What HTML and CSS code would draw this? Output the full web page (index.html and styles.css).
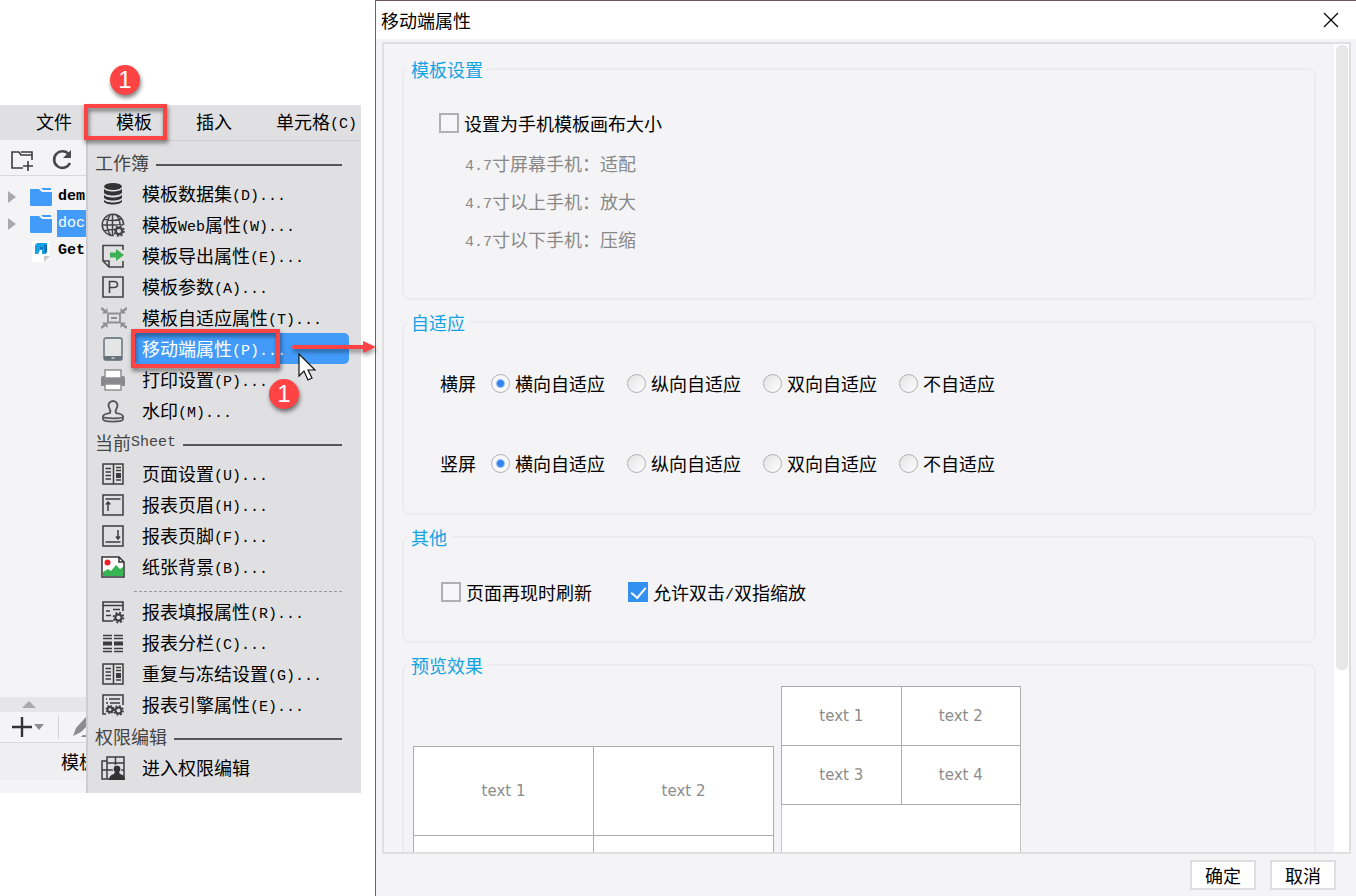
FILE: index.html
```html
<!DOCTYPE html>
<html lang="zh-CN">
<head>
<meta charset="utf-8">
<title>移动端属性</title>
<link rel="stylesheet" href="styles.css">
</head>
<body>
<div class="page">
  <section class="designer">
    <nav class="menubar">
      <button class="menubar-item">文件</button>
      <button class="menubar-item marked">模板<span class="frame frame-bar"></span><span class="badge badge-bar">1</span></button>
      <button class="menubar-item">插入</button>
      <button class="menubar-item">单元格<span class="mono">(C)</span></button>
    </nav>
    <div class="workspace">
      <aside class="sidebar">
        <div class="tools">
          <button class="tool" aria-label="新建文件夹"><svg width="24" height="24" viewBox="0 0 24 24" fill="none" stroke="#3c3c3c" stroke-width="1.6"><path d="M13 20H2V4h7l2 3h11v5M11 4h11v3"/><path d="M18 13v10M13 18h10"/></svg></button>
          <button class="tool" aria-label="刷新"><svg width="24" height="24" viewBox="0 0 24 24" fill="none" stroke="#484848" stroke-width="2.6"><path d="M19 6.500A8.300 8.300 0 1 0 20 15"/><path d="M21 2v8h-8z" fill="#484848" stroke="none"/></svg></button>
        </div>
        <ul class="tree">
          <li class="node"><span class="twisty"></span><svg class="folder" width="22" height="18" viewBox="0 0 22 18"><path d="M0 1h9l3 3h10v12.500q0 1.500-1.500 1.500h-19Q0 18 0 16.500z" fill="#429bf9"/><path d="M11 0h10v2h-8z" fill="#429bf9"/></svg><span class="node-name">dem</span></li>
          <li class="node"><span class="twisty"></span><svg class="folder" width="22" height="18" viewBox="0 0 22 18"><path d="M0 1h9l3 3h10v12.500q0 1.500-1.500 1.500h-19Q0 18 0 16.500z" fill="#429bf9"/><path d="M11 0h10v2h-8z" fill="#429bf9"/></svg><span class="node-name selected">doc</span></li>
          <li class="node"><span class="twisty none"></span><svg class="folder" width="22" height="22" viewBox="0 0 22 22"><path d="M2 1h18v15l-5 6H2z" fill="#fff"/><path d="M14 16h6l-6 6z" fill="#c9c9cc"/><path d="M5 5l2-2h10v9l-2 2h-3v-4h-2l-2 4H5z" fill="#18a0e4"/><path d="M10 7h3v2h-3zM14 5h3v7l-2 2z" fill="#0a72be"/></svg><span class="node-name">Get</span></li>
        </ul>
        <div class="splitter"><span class="up"></span></div>
        <div class="tools data-tools">
          <button class="tool" aria-label="添加"><svg width="24" height="24" viewBox="0 0 24 24"><path d="M12 2v20M2 12h20" stroke="#333" stroke-width="2.400"/></svg></button>
          <span class="down"></span><span class="rule"></span>
          <button class="tool" aria-label="编辑"><svg width="24" height="24" viewBox="0 0 24 24" fill="#8c8c8e"><path d="M2 21l3-8L15 2l6 4-11 11zM12 20h10v2H10z"/></svg></button>
        </div>
        <div class="dataset-tab">模板</div>
      </aside>

      <div class="menu">
        <h3 class="group">工作簿</h3>
        <button class="item"><svg class="icon" viewBox="0 0 24 24" fill="#333"><ellipse cx="12" cy="4.500" rx="9" ry="3.500"/><path d="M3 6.500c1 4 17 4 18 0v4c-1 4-17 4-18 0zM3 12.500c1 4 17 4 18 0v3c-1 4-17 4-18 0zM3 17.500c1 4 17 4 18 0v2c-1 4-17 4-18 0z"/></svg><span class="label">模板数据集<span class="mono">(D)...</span></span></button>
        <button class="item"><svg class="icon" viewBox="0 0 24 24" fill="none" stroke="#444" stroke-width="1.500"><path d="M13 22.500A10.700 10.700 0 1 1 22.600 12M11.500 1v22M1 12h21M3 6q9 3 17 0M3 18q5-2 10-1.500M10 1Q2 11 10 23M14 1q5 4 5 11"/><circle cx="18" cy="18" r="6" fill="#e0e0e2" stroke="none"/><circle cx="18" cy="18" r="3.300" stroke-width="2.400"/><circle cx="18" cy="18" r="5" stroke-width="1.600" stroke-dasharray="2 1.930"/></svg><span class="label">模板<span class="mono">Web</span>属性<span class="mono">(W)...</span></span></button>
        <button class="item"><svg class="icon" viewBox="0 0 24 24" fill="none" stroke="#444" stroke-width="1.600"><path d="M22 6V1.500H2V17l6 6h14v-6M2 17h6v6"/><path d="M9 8.500h6V5l8 6-8 6v-3.500H9z" fill="#3cb054" stroke="none"/></svg><span class="label">模板导出属性<span class="mono">(E)...</span></span></button>
        <button class="item"><svg class="icon" viewBox="0 0 24 24" fill="none" stroke="#444" stroke-width="1.600"><path d="M2 2h20v20H2zM8.500 18V6.500h4.500q3.500 0 3.500 3t-3.500 3H8.500"/></svg><span class="label">模板参数<span class="mono">(A)...</span></span></button>
        <button class="item"><svg class="icon wide" viewBox="0 0 26 24" fill="none" stroke="#8f8f91" stroke-width="1.800"><path d="M7 7.500h12v9H7zM10 12h6"/><path d="M0 2l5 4M26 2l-5 4M0 22l5-4M26 22l-5-4" stroke-width="2.400"/><path d="M1 7.500h5.500V2zM25 7.500h-5.500V2zM1 16.500h5.500V22zM25 16.500h-5.500V22z" fill="#8f8f91" stroke="none"/></svg><span class="label">模板自适应属性<span class="mono">(T)...</span></span></button>
        <button class="item active"><svg class="icon" viewBox="0 0 24 24"><rect x="3" y="1" width="18" height="22" rx="2" fill="#e4e5e7" stroke="#7b868d" stroke-width="1.800"/><path d="M3 19h18v4H3z" fill="#66737b"/><path d="M10.500 21h3" stroke="#fff"/></svg><span class="label">移动端属性<span class="mono">(P)...</span><span class="frame frame-item"></span><span class="badge badge-item">1</span>
          <svg class="arrow" width="86" height="22" viewBox="0 0 86 22"><path d="M2 9h72" stroke="#fd4344" stroke-width="4" stroke-linecap="round"/><path d="M71 3l13 6-13 6z" fill="#fd4344"/></svg>
          <svg class="cursor" width="20" height="28" viewBox="0 0 20 28"><path d="M1 1v22l5-5 4 9 4-2-4-8h7z" fill="#fff" stroke="#111" stroke-width="1.200"/></svg></span></button>
        <button class="item"><svg class="icon" viewBox="0 0 24 24"><path d="M2 8h20q2 0 2 2v8H0v-8q0-2 2-2z" fill="#89898b"/><path d="M4 2h16v8H4zM4 16h16v6H4z" fill="#fff" stroke="#909092" stroke-width="1.500"/></svg><span class="label">打印设置<span class="mono">(P)...</span></span></button>
        <button class="item"><svg class="icon" viewBox="0 0 24 24" fill="none" stroke="#58585a" stroke-width="1.900"><path d="M9 14q1-2-.5-4.500C6 5 9 2 12 2s6 3 3.500 7.500Q14 12 15 14c3 .5 7 1 7 3.500S2 20 2 17.500 6 14.500 9 14zM2 17v3c0 3.500 20 3.500 20 0v-3"/></svg><span class="label">水印<span class="mono">(M)...</span></span></button>

        <h3 class="group">当前<span class="mono">Sheet</span></h3>
        <button class="item"><svg class="icon" viewBox="0 0 24 24" fill="none" stroke="#3c3c3c" stroke-width="1.500"><path d="M2 2h20v20H2zM12.500 2v20M4.500 6.500H10M4.500 10H10M4.500 13.500H10M4.500 17H10M15 5.500h5M15 8.500h5M15 18h5"/><path d="M15 11h5v5h-5z" fill="#3c3c3c" stroke="none"/></svg><span class="label">页面设置<span class="mono">(U)...</span></span></button>
        <button class="item"><svg class="icon" viewBox="0 0 24 24" fill="none" stroke="#3c3c3c" stroke-width="1.500"><path d="M2 2h20v20H2zM4.500 6h15M7 18v-8M5 11.500L7 9l2.500 2.500"/></svg><span class="label">报表页眉<span class="mono">(H)...</span></span></button>
        <button class="item"><svg class="icon" viewBox="0 0 24 24" fill="none" stroke="#3c3c3c" stroke-width="1.500"><path d="M2 2h20v20H2zM4.500 18h15M17 6v8M15 12.500l2 2.500 2-2.500"/></svg><span class="label">报表页脚<span class="mono">(F)...</span></span></button>
        <button class="item"><svg class="icon" viewBox="0 0 24 24"><path d="M1 2h17l5 5v15H1z" fill="#fff" stroke="#333" stroke-width="1.500"/><path d="M2 21v-4l5-3 3 2 5-6 4 4 3-2v9z" fill="#36b352"/><circle cx="6.500" cy="7.500" r="3" fill="#f11f2c"/><path d="M18 2v5h5" fill="none" stroke="#333" stroke-width="1.500"/></svg><span class="label">纸张背景<span class="mono">(B)...</span></span></button>
        <hr class="divider">
        <button class="item"><svg class="icon" viewBox="0 0 24 24" fill="none" stroke="#3c3c3c" stroke-width="1.600"><path d="M12 21H2V2h20v9M2 5.500h20M5 11h4M12 9.500h7M5 15.500h5"/><circle cx="17.500" cy="17.500" r="3.200" stroke-width="2.200"/><circle cx="17.500" cy="17.500" r="5" stroke-dasharray="2 1.930"/></svg><span class="label">报表填报属性<span class="mono">(R)...</span></span></button>
        <button class="item"><svg class="icon" viewBox="0 0 24 24" stroke="#3c3c3c" stroke-width="1.500"><path d="M2 4.500h9M13 4.500h9M2 7.500h9M13 7.500h9M2 17.500h9M13 17.500h9M2 20.500h9M13 20.500h9"/><path d="M2 12.500h9M13 12.500h9" stroke-width="4"/></svg><span class="label">报表分栏<span class="mono">(C)...</span></span></button>
        <button class="item"><svg class="icon" viewBox="0 0 24 24" fill="none" stroke="#3c3c3c" stroke-width="1.500"><path d="M2 2h20v20H2zM12.500 2v20M4.500 6.500H10M4.500 10H10M4.500 13.500H10M4.500 17H10M15 5.500h5M15 8.500h5M15 18h5"/><path d="M15 11h5v5h-5z" fill="#3c3c3c" stroke="none"/></svg><span class="label">重复与冻结设置<span class="mono">(G)...</span></span></button>
        <button class="item"><svg class="icon" viewBox="0 0 24 24" fill="none" stroke="#3c3c3c" stroke-width="1.500"><path d="M5 21H2V2h20v10M5 6h1M8 6h11M5 10h2M9 10h10"/><circle cx="9" cy="16.500" r="2.500" stroke-width="2"/><circle cx="9" cy="16.500" r="3.800" stroke-dasharray="1.500 1.480"/><circle cx="17.500" cy="17.500" r="3" stroke-width="2"/><circle cx="17.500" cy="17.500" r="4.600" stroke-dasharray="1.800 1.810"/></svg><span class="label">报表引擎属性<span class="mono">(E)...</span></span></button>

        <h3 class="group">权限编辑</h3>
        <button class="item"><svg class="icon" viewBox="0 0 24 24" fill="none" stroke="#3c3c3c" stroke-width="1.500"><path d="M1 5h5V1h17v22H1zM6 5v18M1 14h22M14.500 1v10M6 7h17"/><circle cx="16" cy="13" r="4" fill="#333" stroke="#e0e0e2" stroke-width="1"/><path d="M8 24q0-5 5-6l1-2h4l1 2q5 1 5 6z" fill="#333" stroke="none"/></svg><span class="label">进入权限编辑</span></button>
      </div>
    </div>
  </section>

  <main class="dialog">
    <header class="titlebar">
      <h1 class="title">移动端属性</h1>
      <button class="close" aria-label="关闭"><svg width="16" height="16" viewBox="0 0 16 16"><path d="M1 1l14 14M15 1L1 15" stroke="#000" stroke-width="1.200"/></svg></button>
    </header>
    <div class="panel">
      <div class="panel-body">
        <fieldset class="box box-template">
          <legend>模板设置</legend>
          <label class="option"><input type="checkbox" class="check">设置为手机模板画布大小</label>
          <ul class="notes">
            <li><span class="mono">4.7</span>寸屏幕手机：适配</li>
            <li><span class="mono">4.7</span>寸以上手机：放大</li>
            <li><span class="mono">4.7</span>寸以下手机：压缩</li>
          </ul>
        </fieldset>
        <fieldset class="box box-fit">
          <legend>自适应</legend>
          <div class="radios" role="radiogroup" aria-labelledby="land">
            <span class="radios-name" id="land">横屏</span>
            <label class="option"><input type="radio" class="radio" name="land" checked>横向自适应</label>
            <label class="option"><input type="radio" class="radio" name="land">纵向自适应</label>
            <label class="option"><input type="radio" class="radio" name="land">双向自适应</label>
            <label class="option"><input type="radio" class="radio" name="land">不自适应</label>
          </div>
          <div class="radios" role="radiogroup" aria-labelledby="port">
            <span class="radios-name" id="port">竖屏</span>
            <label class="option"><input type="radio" class="radio" name="port" checked>横向自适应</label>
            <label class="option"><input type="radio" class="radio" name="port">纵向自适应</label>
            <label class="option"><input type="radio" class="radio" name="port">双向自适应</label>
            <label class="option"><input type="radio" class="radio" name="port">不自适应</label>
          </div>
        </fieldset>
        <fieldset class="box box-other">
          <legend>其他</legend>
          <div class="checks">
            <label class="option"><input type="checkbox" class="check">页面再现时刷新</label>
            <label class="option"><input type="checkbox" class="check" checked><span>允许双击<span class="mono">/</span>双指缩放</span></label>
          </div>
        </fieldset>
        <fieldset class="box box-preview">
          <legend>预览效果</legend>
          <div class="previews">
            <table class="grid grid-land">
              <tr><td>text 1</td><td>text 2</td></tr>
              <tr><td></td><td></td></tr>
            </table>
            <div class="phone">
              <table class="grid grid-port">
                <tr><td>text 1</td><td>text 2</td></tr>
                <tr><td>text 3</td><td>text 4</td></tr>
              </table>
            </div>
          </div>
        </fieldset>
      </div>
      <div class="scrollbar"><div class="thumb"></div></div>
    </div>
    <footer class="actions">
      <button class="btn">确定</button>
      <button class="btn">取消</button>
    </footer>
  </main>
</div>
</body>
</html>
```
FILE: styles.css
```css
* { box-sizing: border-box; }

body {
  margin: 0;
  background: #fff;
  color: #000;
  font: 18px/24px "Noto Sans CJK SC", "Liberation Sans", sans-serif;
}

button {
  margin: 0;
  padding: 0;
  border: 0;
  background: none;
  color: inherit;
  font: inherit;
  text-align: left;
}

ul { margin: 0; padding: 0; list-style: none; }

.mono {
  font-family: "Liberation Mono", monospace;
  font-size: 15px;
  line-height: 1;
  vertical-align: 1px;
}

.page {
  display: flex;
  gap: 14px;
  height: 100vh;
  overflow: hidden;
}

/* designer window */
.designer {
  flex: none;
  width: 361px;
  padding-top: 105px;
}

.menubar {
  display: flex;
  gap: 44px;
  height: 35px;
  padding: 4px 0 7px 36px;
  background: #e0e0e2;
}

.menubar-item { position: relative; flex: none; white-space: nowrap; }

.workspace { display: flex; }

.sidebar {
  flex: none;
  display: flex;
  flex-direction: column;
  width: 86px;
  overflow: hidden;
  background: #f4f4f6;
}

.tools {
  display: flex;
  align-items: center;
  gap: 16px;
  height: 36px;
  padding: 4px 0 0 10px;
  border-bottom: 1px solid #d9d9db;
}
.tool { flex: none; height: 24px; }
.tool svg { display: block; }

.tree { flex: 1; padding-top: 7px; }
.node { display: flex; align-items: center; height: 27px; }
.twisty {
  flex: none;
  margin: 0 14px 0 8px;
  border: 6px solid transparent;
  border-left: 8px solid #a9a9ab;
  border-right: 0;
}
.twisty.none { visibility: hidden; }
.folder { flex: none; }
.node-name {
  flex: none;
  height: 27px;
  margin-left: 5px;
  padding: 0 1px;
  font: bold 15px/27px "Liberation Mono", monospace;
}
.node-name.selected { width: 40px; background: #429bf9; color: #fff; font-weight: normal; }

.splitter {
  display: flex;
  justify-content: center;
  height: 15px;
  padding: 4px 28px 0 0;
  background: #e6e6e8;
}
.up { height: 7px; border: 7px solid transparent; border-bottom-color: #aaaaac; border-top: 0; }
.data-tools { height: 31px; gap: 0; padding-top: 0; }
.down { border: 5px solid transparent; border-top: 6px solid #8c8c8e; border-bottom: 0; }
.rule { flex: none; width: 1px; height: 24px; margin: 0 12px 0 14px; background: #d4d4d6; }
.dataset-tab {
  margin-bottom: 13px;
  padding: 6px 0 7px 61px;
  background: #efeff1;
  white-space: nowrap;
}

/* drop-down menu */
.menu {
  flex: 1;
  padding: 5px 0 10px;
  border-top: 1px solid #cdcdd0;
  border-left: 2px solid #cdcdd0;
  background: #e0e0e2;
}

.group {
  display: flex;
  align-items: center;
  gap: 7px;
  height: 32px;
  margin: 0;
  padding: 0 19px 0 7px;
  color: #444;
  font-size: 18px;
  font-weight: normal;
}
.group .mono { margin-left: -7px; }
.group::after { content: ""; flex: 1; height: 2px; margin-top: 6px; background: #555; }

.item {
  display: flex;
  align-items: center;
  width: 100%;
  height: 31px;
  padding: 0 12px 0 13px;
}
.icon { flex: none; width: 24px; height: 24px; margin-right: 8px; }
.icon.wide { width: 26px; margin-right: 6px; }
.label {
  position: relative;
  flex: 1;
  height: 31px;
  padding-left: 9px;
  border-radius: 5px;
  line-height: 30px;
  white-space: nowrap;
}
.active .label { background: #429bf9; color: #fff; }

.divider { margin: 9px 19px 4px 46px; border: 0; border-top: 1px dashed #999; }

/* callouts over the menu */
.frame {
  position: absolute;
  border: 4px solid #fd4344;
  filter: drop-shadow(1px 3px 2px rgba(0, 0, 0, .5));
}
.frame-bar { left: -32px; top: -5px; width: 83px; height: 36px; }
.frame-item { left: -2px; top: -4px; width: 149px; height: 39px; }

.badge {
  position: absolute;
  width: 30px;
  height: 30px;
  border-radius: 50%;
  background: #fd4344;
  box-shadow: 1px 3px 4px rgba(0, 0, 0, .5);
  color: #fff;
  font: 24px/30px "Liberation Sans", sans-serif;
  text-align: center;
}
.badge-bar { left: -6px; top: -44px; }
.badge-item { left: 136px; top: 46px; }
.arrow { position: absolute; left: 159px; top: 5px; filter: drop-shadow(1px 3px 2px rgba(0, 0, 0, .4)); }
.cursor { position: absolute; left: 165px; top: 20px; }

/* dialog */
.dialog {
  flex: 1;
  display: flex;
  flex-direction: column;
  min-width: 0;
  border-top: 1px solid #6b5560;
  border-left: 1px solid #666;
  background: #f4f4f6;
}
.titlebar {
  display: flex;
  align-items: center;
  justify-content: space-between;
  height: 38px;
  padding: 0 17px 0 5px;
  background: #fff;
}
.title { margin: 0; font-size: 18px; font-weight: normal; }
.close svg { display: block; }

.panel {
  flex: 1;
  display: flex;
  min-height: 0;
  margin: 3px 5px 0 6px;
  border: 2px solid #dfdfe1;
  overflow: hidden;
}
.panel-body {
  flex: 1;
  display: flex;
  flex-direction: column;
  gap: 10px;
  padding: 13px 18px 0;
}
.scrollbar { width: 15px; padding: 1px 1px 0 2px; background: #fff; }
.thumb { height: 77.5%; border-radius: 5px; background: #e7e7e7; }

.box {
  flex: none;
  min-width: 0;
  margin: 0;
  border: 2px solid #ececee;
  border-radius: 8px;
}
.box legend { padding: 0 4px; color: #14a3e3; }
.box-template { padding: 30px 35px 40px; }
.box-fit { padding: 37px 36px 38px; }
.box-other { padding: 31px 37px 37px; }
.box-preview { padding: 9px 9px 0; }
.box-template legend { margin-left: -32px; }
.box-fit legend { margin-left: -33px; }
.box-other legend { margin-left: -34px; }
.box-preview legend { margin-left: -6px; }

.option { display: flex; align-items: center; gap: 5px; height: 24px; }
.checks { display: flex; gap: 36px; }
.notes { margin-top: 9px; padding-left: 26px; color: #888; line-height: 38px; }
.radios { display: flex; gap: 22px; }
.radios + .radios { margin-top: 56px; }
.radios-name { margin-right: -7px; }

.check, .radio { appearance: none; flex: none; margin: 0; }
.check {
  width: 20px;
  height: 20px;
  border: 2px solid #b0b0b0;
  background: #f6f6f8;
}
.check:checked { border-color: #3291f0; background: #3291f0; }
.check:checked::after {
  content: "";
  display: block;
  width: 7px;
  height: 12px;
  margin: 0 0 0 4px;
  border: solid #fff;
  border-width: 0 2px 2px 0;
  transform: rotate(40deg);
}
.radio {
  width: 19px;
  height: 19px;
  border: 1px solid #b2b2b2;
  border-radius: 50%;
  background: linear-gradient(135deg, #e2e2e2, #fff);
}
.radio:checked { background: radial-gradient(circle, #3385ee 0 3px, #f8f8f8 5px); }

.previews { display: flex; align-items: flex-start; gap: 7px; }
.grid {
  border-collapse: collapse;
  table-layout: fixed;
  background: #fff;
  color: #8c8c8c;
  font: 15px/20px "DejaVu Sans", sans-serif;
  text-align: center;
}
.grid td { padding: 0; border: 1px solid #adadad; }
.grid-land { width: 361px; margin-top: 60px; }
.grid-land td { height: 89px; }
.phone { width: 240px; height: 360px; border: 1px solid #c6c6c6; background: #fff; }
.grid-port { width: 240px; margin: -1px; }
.grid-port td { height: 59px; }

.actions {
  display: flex;
  justify-content: flex-end;
  gap: 14px;
  padding: 6px 20px;
}
.btn {
  width: 66px;
  height: 30px;
  border: 2px solid #dedee0;
  background: #fff;
  line-height: 26px;
  text-align: center;
}
```
